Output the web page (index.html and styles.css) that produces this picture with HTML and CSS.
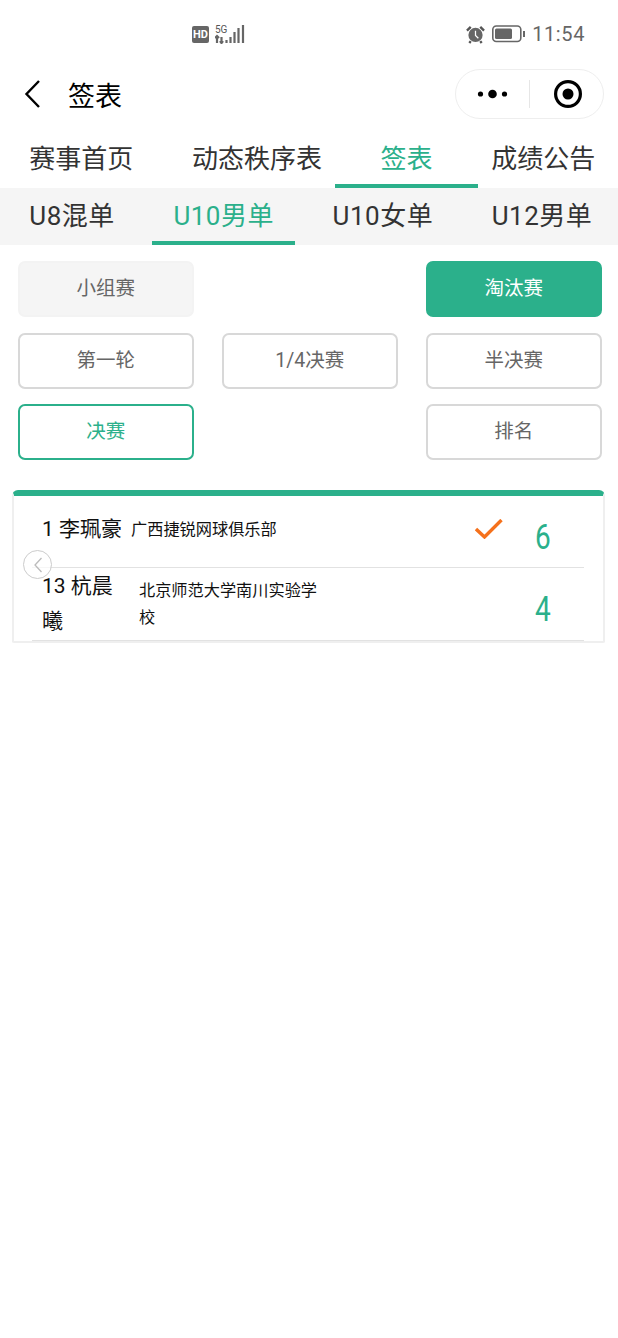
FILE: index.html
```html
<!DOCTYPE html>
<html lang="zh-CN">
<head>
  <meta charset="UTF-8">
  <meta name="viewport" content="width=device-width, initial-scale=1.0">
  <title>签表</title>
  <link rel="stylesheet" href="styles.css">
</head>
<body>
  <div class="status">
    <div class="status-left">
      <span class="hd">HD</span>
      <svg class="signal" width="30" height="19" viewBox="0 0 30 19">
        <text x="0" y="8" class="signal-5g">5G</text>
        <path d="M2 11V18M0 13L2 11L4 13M6.500 12V18M5 16L6.500 18L8 16M11.500 15V18M15.500 12V18M19.500 7V18M23.500 3V18M28 0V18" class="signal-bars"/>
      </svg>
    </div>
    <div class="status-right">
      <svg width="19" height="19" viewBox="0 0 20 20">
        <path d="M1 6L5 2M19 6L15 2M5 17L3.500 19M15 17L16.500 19" stroke="#555" stroke-width="2.500" fill="none"/>
        <circle cx="10" cy="10.500" r="7.500" fill="#666"/>
        <path d="M10 6V11L13 14" stroke="#fff" stroke-width="1.300" fill="none"/>
      </svg>
      <svg width="33" height="18" viewBox="0 0 33 18">
        <rect x="0.800" y="1" width="28" height="15.500" rx="3.500" fill="none" stroke="#666" stroke-width="1.600"/>
        <rect x="3" y="3.500" width="17" height="10.500" rx="1.500" fill="#666"/>
        <rect x="31" y="6" width="2" height="6" fill="#666"/>
      </svg>
      <span class="time">11:54</span>
    </div>
  </div>

  <div class="nav">
    <svg class="back" width="20" height="30" viewBox="0 0 20 30">
      <path d="M16 2L3.500 15L16 28" fill="none" stroke="#000" stroke-width="2.400"/>
    </svg>
    <span class="nav-title">签表</span>
    <div class="capsule">
      <svg width="32" height="12" viewBox="0 0 32 12">
        <circle cx="3.500" cy="6" r="2.600" fill="#000"/>
        <circle cx="15.500" cy="6" r="4.300" fill="#000"/>
        <circle cx="27.500" cy="6" r="2.600" fill="#000"/>
      </svg>
      <i class="capsule-line"></i>
      <svg width="30" height="30" viewBox="0 0 30 30">
        <circle cx="15" cy="15" r="12.400" fill="none" stroke="#000" stroke-width="3.200"/>
        <circle cx="15" cy="15" r="5.500" fill="#000"/>
      </svg>
    </div>
  </div>

  <div class="tabs">
    <span class="tab">赛事首页</span>
    <span class="tab">动态秩序表</span>
    <span class="tab on">签表</span>
    <span class="tab">成绩公告</span>
  </div>

  <div class="tabs tabs-sub">
    <span class="tab">U8混单</span>
    <span class="tab on">U10男单</span>
    <span class="tab">U10女单</span>
    <span class="tab">U12男单</span>
  </div>

  <div class="btns">
    <div class="btn btn-gray">小组赛</div>
    <div class="btn btn-none"></div>
    <div class="btn btn-fill">淘汰赛</div>
    <div class="btn">第一轮</div>
    <div class="btn">1/4决赛</div>
    <div class="btn">半决赛</div>
    <div class="btn btn-green">决赛</div>
    <div class="btn btn-none"></div>
    <div class="btn">排名</div>
  </div>

  <div class="card">
    <div class="row">
      <div class="name">1 李珮豪</div>
      <div class="club">广西捷锐网球俱乐部</div>
      <svg class="check" width="28" height="20" viewBox="0 0 28 20">
        <path d="M1 10L9.500 18L26.500 1" fill="none" stroke="#f5711c" stroke-width="3.400"/>
      </svg>
      <div class="score">6</div>
    </div>
    <div class="row row-two">
      <div class="name">13 杭晨曦</div>
      <div class="club">北京师范大学南川实验学校</div>
      <div class="score">4</div>
    </div>
    <div class="prev">
      <svg width="12" height="18" viewBox="0 0 12 18">
        <path d="M9.500 2L3 9L9.500 16" fill="none" stroke="#bbb" stroke-width="1.300"/>
      </svg>
    </div>
  </div>
</body>
</html>
```

FILE: styles.css
```css
*
{
  box-sizing:border-box;
}
body
{
  margin:0;
  background:#fff;
  font-family:Roboto, "Noto Sans CJK SC", sans-serif;
  overflow-x:hidden;
}
.status
{
  height:68px;
  display:flex;
  justify-content:space-between;
  align-items:center;
  padding:0 33px 0 192px;
}
.status-left,
.status-right
{
  display:flex;
  align-items:center;
}
.hd
{
  width:17px;
  height:17px;
  line-height:17px;
  margin-right:6px;
  border-radius:2px;
  background:#666;
  color:#fff;
  font-size:11px;
  font-weight:700;
  text-align:center;
}
.signal-5g
{
  font-size:10px;
  fill:#555;
}
.signal-bars
{
  stroke:#666;
  stroke-width:2.200;
  fill:none;
}
.status-right svg
{
  margin-right:7px;
}
.time
{
  font-size:20px;
  color:#666;
  letter-spacing:0.600px;
}
.nav
{
  height:54px;
  display:flex;
  align-items:center;
  padding:0 14px 2px 23px;
}
.nav-title
{
  margin-left:25px;
  font-size:27px;
  color:#000;
}
.capsule
{
  width:149px;
  height:50px;
  margin-left:auto;
  display:flex;
  align-items:center;
  justify-content:space-between;
  padding:0 20px 0 21px;
  border:1px solid #eee;
  border-radius:25px;
}
.capsule-line
{
  width:1px;
  height:28px;
  margin-right:3px;
  background:#e6e6e6;
}
.tabs
{
  height:53px;
  margin-top:13px;
  display:flex;
  overflow:hidden;
  background:#fff;
}
.tabs-sub
{
  height:57px;
  margin-top:0;
  background:#f5f5f5;
}
.tab
{
  position:relative;
  flex:none;
  height:100%;
  padding:0 29.300px;
  line-height:48px;
  font-size:26px;
  color:#333;
  white-space:nowrap;
}
.tabs-sub .tab
{
  line-height:56px;
  letter-spacing:0.500px;
}
.tab.on
{
  color:#2bb08b;
}
.tab.on::after
{
  content:"";
  position:absolute;
  left:50%;
  bottom:0;
  width:143px;
  height:4px;
  margin-left:-71.500px;
  background:#2bb08b;
}
.btns
{
  display:grid;
  grid-template-columns:175.500px 175.500px 175.500px;
  grid-auto-rows:56px;
  column-gap:28.500px;
  row-gap:15.500px;
  padding:16px 0 0 18px;
}
.btn
{
  line-height:52px;
  border:2px solid #d8d8d8;
  border-radius:7px;
  font-size:19.500px;
  color:#666;
  text-align:center;
}
.btn-none
{
  visibility:hidden;
}
.btn-gray
{
  border-color:#f3f3f3;
  background:#f5f5f5;
}
.btn-fill
{
  border-color:#2bb08b;
  background:#2bb08b;
  color:#fff;
}
.btn-green
{
  border-color:#2bb08b;
  color:#2bb08b;
}
.card
{
  position:relative;
  width:593px;
  margin:30px 0 0 12px;
  padding:0 19px 0 18px;
  border:2px solid #efefef;
  border-top:6px solid #2bb08b;
  border-radius:6px 6px 2px 2px;
}
.row
{
  height:72px;
  display:flex;
  align-items:center;
  padding:0 0 4px 10px;
  border-bottom:1px solid #e2e2e2;
}
.row-two
{
  height:73px;
  padding-bottom:0;
}
.name
{
  max-width:88px;
  line-height:35px;
  font-size:21px;
  color:#111;
}
.club
{
  width:180px;
  margin-left:9px;
  line-height:27px;
  font-size:16.200px;
  color:#111;
}
.check
{
  margin:-2px 0 0 auto;
}
.score
{
  width:15px;
  margin:15px 34px 0 32px;
  font-size:35px;
  font-weight:400;
  color:#2bb08b;
  transform:scaleX(0.8);
  transform-origin:left center;
}
.row-two .score
{
  margin-left:auto;
  margin-top:10px;
}
.prev
{
  position:absolute;
  left:9px;
  top:54px;
  width:29px;
  height:29px;
  display:flex;
  align-items:center;
  justify-content:center;
  border:1.500px solid #ccc;
  border-radius:50%;
  background:rgba(255,255,255,0.7);
}
```
